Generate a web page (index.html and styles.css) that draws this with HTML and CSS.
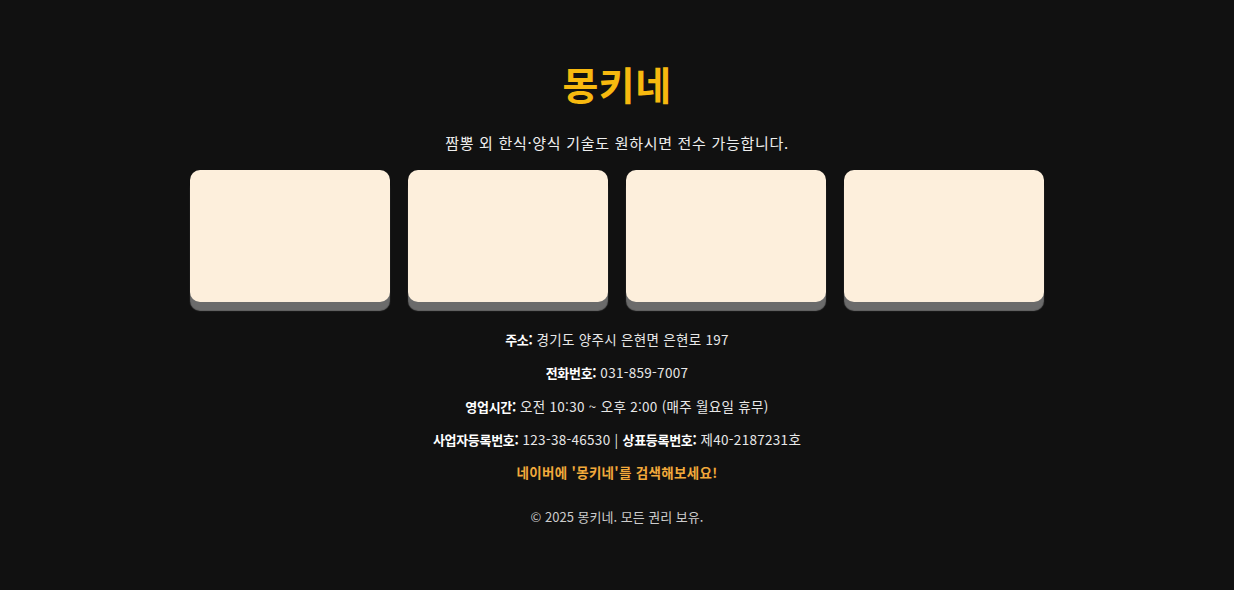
FILE: index.html
```html
<!DOCTYPE html>
<html lang="ko">
<head>
<meta charset="utf-8">
<title>몽키네</title>
<link rel="stylesheet" href="styles.css">
</head>
<body>
<main class="page">
  <h1 class="title">몽키네</h1>
  <p class="subtitle">짬뽕 외 한식·양식 기술도 원하시면 전수 가능합니다.</p>
  <section class="cards">
    <div class="card"></div>
    <div class="card"></div>
    <div class="card"></div>
    <div class="card"></div>
  </section>
  <section class="info">
    <p><strong>주소:</strong> 경기도 양주시 은현면 은현로 197</p>
    <p><strong>전화번호:</strong> 031-859-7007</p>
    <p><strong>영업시간:</strong> 오전 10:30 ~ 오후 2:00 (매주 월요일 휴무)</p>
    <p><strong>사업자등록번호:</strong> 123-38-46530 | <strong>상표등록번호:</strong> 제40-2187231호</p>
    <p class="naver">네이버에 '몽키네'를 검색해보세요!</p>
  </section>
  <footer class="footer">© 2025 몽키네. 모든 권리 보유.</footer>
</main>
</body>
</html>
```
FILE: styles.css
```css
html, body {
  margin: 0;
  padding: 0;
  background: #111111;
}
body {
  font-family: "Noto Sans CJK KR", "Noto Sans", sans-serif;
  color: #eeeeee;
}
.page {
  display: flex;
  flex-direction: column;
  align-items: center;
  padding-top: 61px;
}
.title {
  margin: 0;
  font-size: 39px;
  line-height: 44px;
  font-weight: 700;
  letter-spacing: 0.5px;
  color: #f7b90f;
}
.subtitle {
  margin: 27px 0 0;
  font-size: 15px;
  line-height: 22px;
  letter-spacing: 0.7px;
  color: #eeeeee;
}
.cards {
  display: flex;
  gap: 18px;
  margin-top: 16px;
}
.card {
  width: 200px;
  height: 132px;
  background: #fdefdc;
  border-radius: 10px;
  box-shadow: 0 9px 1px #6b6b6b;
}
.info {
  margin-top: 27px;
  display: flex;
  flex-direction: column;
  align-items: center;
  gap: 13.3px;
}
.info p {
  margin: 0;
  height: 20px;
  font-size: 13.5px;
  line-height: 20px;
  letter-spacing: 0.3px;
  color: #e8e8e8;
}
.info strong {
  font-weight: 700;
  font-size: 13px;
  line-height: 13px;
  letter-spacing: -0.3px;
  color: #ffffff;
}
.info .naver {
  font-weight: 700;
  font-size: 13.5px;
  letter-spacing: 0.3px;
  color: #f2a93b;
}
.footer {
  margin-top: 25px;
  font-size: 13px;
  line-height: 20px;
  color: #cccccc;
}
```
